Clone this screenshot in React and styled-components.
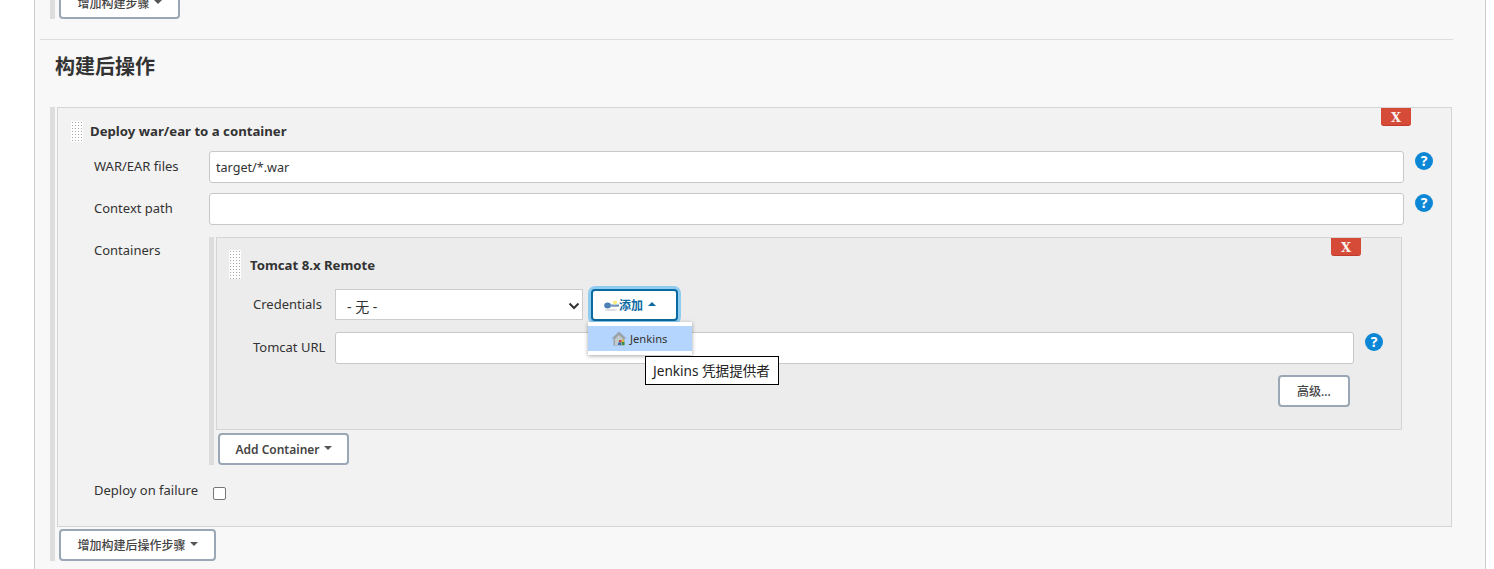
import React from 'react'
import styled, {createGlobalStyle} from 'styled-components'

const GlobalStyle = createGlobalStyle`
    html, body {margin: 0; padding: 0; background: #fff; overflow: hidden}
    body {font-family: "Noto Sans", "Noto Sans CJK SC", sans-serif; font-size: 13px; color: #333}
`;

const Page = styled.div`
    height: 569px;
    overflow: hidden;
    padding-left: 34px;
`;

const Main = styled.div`
    width: 1435px;
    height: 600px;
    background: #f8f8f8;
    border-left: 1px solid #ccc;
    border-right: 1px solid #ccc;
    padding: 0 0 0 15px;
    box-sizing: content-box;
`;

const Strip = styled.div`
    display: flex;
    flex-direction: column;
    align-items: flex-start;
    border-left: 5px solid #ddd;
    width: ${p => p.$fit ? 'fit-content' : 'auto'};
`;

const Button = styled.button`
    font-family: inherit;
    font-size: 12px;
    font-weight: ${p => p.$bold ? 600 : 500};
    color: #444;
    background: #fff;
    border: 2px solid #9aa7b4;
    border-radius: 4px;
    height: 32px;
    width: ${p => p.$width}px;
    margin: ${p => p.$margin || 0};
    padding: 0;
    display: flex;
    align-items: center;
    justify-content: center;
    gap: 4px;
    flex: none;
`;

const Caret = styled.span`
    width: 0;
    height: 0;
    border-left: 4px solid transparent;
    border-right: 4px solid transparent;
    border-${p => p.$up ? 'bottom' : 'top'}: 4px solid ${p => p.$up ? '#0b6aa2' : '#555'};
    margin-top: -2px;
`;

const Rule = styled.div`
    height: 1px;
    background: #ddd;
    margin: 20px 0 0 -10px;
    width: 1413px;
`;

const Heading = styled.h2`
    margin: 13px 0 27px 5px;
    height: 27px;
    line-height: 27px;
    font-size: 20px;
    font-weight: 700;
    color: #333;
`;

const Card = styled.div`
    position: relative;
    box-sizing: border-box;
    margin-left: 2px;
    width: ${p => p.$width}px;
    height: ${p => p.$height}px;
    background: ${p => p.$bg};
    border: 1px solid #d5d5d5;
    padding: ${p => p.$pad};
`;

const Header = styled.div`
    display: flex;
    align-items: center;
    gap: ${p => p.$gap}px;
    height: ${p => p.$h}px;
    margin-bottom: ${p => p.$mb}px;
    font-weight: 700;
    font-size: 13.2px;
    color: #333;
`;

const Handle = styled.span`
    width: ${p => p.$w}px;
    height: ${p => p.$h}px;
    flex: none;
    background-color: #fff;
    background-image: radial-gradient(#a8a8a8 0.85px, transparent 0.95px);
    background-size: 3px 3px;
`;

const CloseButton = styled.button`
    position: absolute;
    top: 0;
    right: ${p => p.$right}px;
    width: 30px;
    height: 18px;
    padding: 1px 0 0;
    border: none;
    border-bottom: 1px solid #c23a2c;
    border-radius: 0 0 3px 3px;
    background: #d64a38;
    color: #f7f0ee;
    font-family: "DejaVu Serif", serif;
    font-size: 13px;
    font-weight: 700;
    line-height: 15px;
`;

const Row = styled.div`
    display: flex;
    align-items: flex-start;
    margin-bottom: ${p => p.$mb || 0}px;
`;

const Label = styled.label`
    width: ${p => p.$w}px;
    margin-left: ${p => p.$left}px;
    flex: none;
    font-size: 13px;
    line-height: 20px;
    padding-top: ${p => p.$top ?? 5}px;
    color: #333;
`;

const Input = styled.input`
    box-sizing: border-box;
    width: ${p => p.$w}px;
    height: 32px;
    flex: none;
    border: 1px solid #c8c8c8;
    border-radius: 3px;
    background: #fff;
    padding: 0 6px;
    font-family: inherit;
    font-size: 12.6px;
    color: #333;
    outline: none;
`;

const HelpIcon = styled.span`
    width: 18px;
    height: 18px;
    flex: none;
    margin: 1px 0 0 ${p => p.$left}px;
    border-radius: 50%;
    background: #0b87d6;
    color: #fff;
    font-size: 14px;
    font-weight: 700;
    line-height: 18px;
    text-align: center;
`;

const SelectBox = styled.div`
    box-sizing: border-box;
    width: 248px;
    height: 31px;
    flex: none;
    display: flex;
    align-items: center;
    justify-content: space-between;
    padding: 2px 2px 0 11px;
    background: #fff;
    border: 1px solid #ccc;
    font-size: 14px;
    color: #333;
`;

const FocusButton = styled(Button)`
    position: relative;
    margin-left: 8px;
    padding-right: 9px;
    border: 2px solid #0b6aa2;
    color: #0b6aa2;
    font-weight: 600;
    gap: 0;
    box-shadow: 0 0 0 3px #8fcdf0;
`;

const CaretGap = styled.span`
    width: 5px;
`;

const Menu = styled.div`
    position: absolute;
    left: 371px;
    top: 84px;
    width: 104px;
    height: 33px;
    box-sizing: border-box;
    padding: 4px 0;
    background: #fff;
    box-shadow: 0 1px 4px rgba(0, 0, 0, .35);
    z-index: 2;
`;

const MenuItem = styled.div`
    height: 25px;
    background: #b4d5fe;
    display: flex;
    align-items: center;
    padding-left: 23px;
    gap: 2px;
    font-size: 11.2px;
    color: #333;
`;

const Tooltip = styled.div`
    position: absolute;
    left: 428px;
    top: 118px;
    box-sizing: border-box;
    height: 29px;
    width: 134px;
    padding-left: 7px;
    background: #fff;
    border: 1px solid #000;
    font-size: 13.6px;
    line-height: 27px;
    color: #222;
    white-space: nowrap;
    z-index: 3;
`;

const RightAction = styled.div`
    display: flex;
    justify-content: flex-end;
    width: 1121px;
`;

const Check = styled.input`
    appearance: none;
    box-sizing: border-box;
    width: 13px;
    height: 13px;
    margin: 7px 0 0 0;
    background: #fff;
    border: 1px solid #767676;
    border-radius: 2px;
`;

const ChevronIcon = () => (
    <svg width="12" height="8" viewBox="0 0 12 8">
        <path d="M1.5 1.5 L6 6 L10.5 1.5" fill="none" stroke="#333" strokeWidth="2" />
    </svg>
);

const KeyIcon = () => (
    <svg width="15" height="11" viewBox="0 0 15 11">
        <ellipse cx="7" cy="10" rx="6.5" ry="1" fill="#dcdcdc" />
        <ellipse cx="3.6" cy="5.5" rx="3.4" ry="3" fill="#4c7fb5" />
        <rect x="6" y="4.5" width="9" height="2.2" fill="#6f94bd" />
        <circle cx="11" cy="2.5" r="2" fill="#f6ee7a" />
    </svg>
);

const JenkinsIcon = () => (
    <svg width="17" height="17" viewBox="0 0 17 17">
        <path d="M0.5 8.5 L8 1.5 L15.5 8.5 L13.5 8.5 L13.5 15.5 L2.5 15.5 L2.5 8.5 Z" fill="#9aa4a8" />
        <path d="M4 9 L8 5 L12 9 L12 15 L4 15 Z" fill="#c3cacc" />
        <rect x="8" y="10" width="2.5" height="2.5" fill="#c9463a" />
        <rect x="10.5" y="12" width="3" height="3" fill="#3f8f4a" />
        <rect x="7" y="12.5" width="3" height="2.5" fill="#3d6fb5" />
        <rect x="11" y="9.5" width="2" height="2.5" fill="#e0b93c" />
    </svg>
);

const App = () => (
    <Page>
        <GlobalStyle />
        <Main>
            <Strip $fit>
                <Button $width={121} $margin="-13px 0 0 4px">增加构建步骤 <Caret /></Button>
            </Strip>
            <Rule />
            <Heading>构建后操作</Heading>
            <Strip>
                <Card $width={1395} $height={420} $bg="#f2f2f2" $pad="12px 0 0 13px">
                    <CloseButton $right={40}>X</CloseButton>
                    <Header $h={22} $mb={9} $gap={7}>
                        <Handle $w={12} $h={21} />
                        Deploy war/ear to a container
                    </Header>
                    <Row $mb={10}>
                        <Label $w={115} $left={23}>WAR/EAR files</Label>
                        <Input $w={1195} defaultValue="target/*.war" />
                        <HelpIcon $left={11}>?</HelpIcon>
                    </Row>
                    <Row $mb={12}>
                        <Label $w={115} $left={23}>Context path</Label>
                        <Input $w={1195} />
                        <HelpIcon $left={11}>?</HelpIcon>
                    </Row>
                    <Row $mb={15}>
                        <Label $w={115} $left={23} $top={3}>Containers</Label>
                        <Strip>
                            <Card $width={1186} $height={193} $bg="#ececec" $pad="12px 0 0 12px">
                                <CloseButton $right={40}>X</CloseButton>
                                <Header $h={29} $mb={10} $gap={9}>
                                    <Handle $w={12} $h={29} />
                                    Tomcat 8.x Remote
                                </Header>
                                <Row $mb={11}>
                                    <Label $w={82} $left={24} $top={5}>Credentials</Label>
                                    <SelectBox>- 无 - <ChevronIcon /></SelectBox>
                                    <FocusButton $width={87}><KeyIcon />添加<CaretGap /><Caret $up /></FocusButton>
                                </Row>
                                <Row $mb={11}>
                                    <Label $w={82} $left={24}>Tomcat URL</Label>
                                    <Input $w={1019} />
                                    <HelpIcon $left={11}>?</HelpIcon>
                                </Row>
                                <RightAction>
                                    <Button $width={72}>高级...</Button>
                                </RightAction>
                                <Menu>
                                    <MenuItem><JenkinsIcon />Jenkins</MenuItem>
                                </Menu>
                                <Tooltip>Jenkins 凭据提供者</Tooltip>
                            </Card>
                            <Button $bold $width={131} $margin="3px 0 0 4px">Add Container <Caret /></Button>
                        </Strip>
                    </Row>
                    <Row>
                        <Label $w={119} $left={23} $top={0}>Deploy on failure</Label>
                        <Check type="checkbox" />
                    </Row>
                </Card>
                <Button $width={157} $margin="2px 0 0 4px">增加构建后操作步骤 <Caret /></Button>
            </Strip>
        </Main>
    </Page>
);

export default App
